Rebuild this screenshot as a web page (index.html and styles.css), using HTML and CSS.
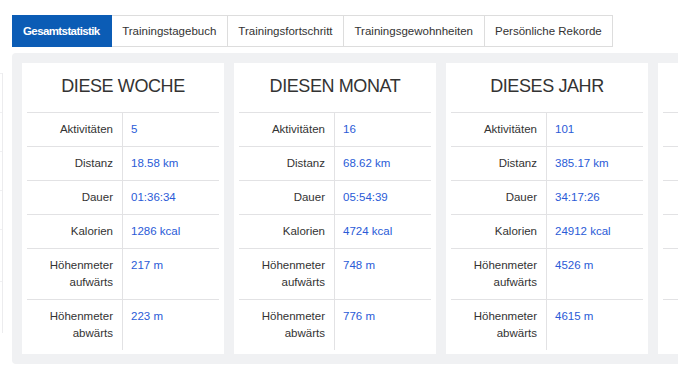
FILE: index.html
```html
<!DOCTYPE html>
<html lang="de">
<head>
<meta charset="utf-8">
<title>Statistik</title>
<link rel="stylesheet" href="styles.css">
</head>
<body>
<div class="page">
  <div class="sliver">
    <div class="sliver-row"></div>
    <div class="sliver-row"></div>
    <div class="sliver-row"></div>
    <div class="sliver-row"></div>
    <div class="sliver-row tall"></div>
    <div class="sliver-row tall"></div>
  </div>
  <div class="main">
    <nav class="tabs">
      <a class="tab active">Gesamtstatistik</a>
      <a class="tab">Trainingstagebuch</a>
      <a class="tab">Trainingsfortschritt</a>
      <a class="tab">Trainingsgewohnheiten</a>
      <a class="tab">Persönliche Rekorde</a>
    </nav>
    <div class="panel">
      <section class="card">
        <h2 class="card-title">DIESE WOCHE</h2>
        <table class="stats">
          <tr><th>Aktivitäten</th><td>5</td></tr>
          <tr><th>Distanz</th><td>18.58 km</td></tr>
          <tr><th>Dauer</th><td>01:36:34</td></tr>
          <tr><th>Kalorien</th><td>1286 kcal</td></tr>
          <tr><th>Höhenmeter aufwärts</th><td>217 m</td></tr>
          <tr><th>Höhenmeter abwärts</th><td>223 m</td></tr>
        </table>
      </section>
      <section class="card">
        <h2 class="card-title">DIESEN MONAT</h2>
        <table class="stats">
          <tr><th>Aktivitäten</th><td>16</td></tr>
          <tr><th>Distanz</th><td>68.62 km</td></tr>
          <tr><th>Dauer</th><td>05:54:39</td></tr>
          <tr><th>Kalorien</th><td>4724 kcal</td></tr>
          <tr><th>Höhenmeter aufwärts</th><td>748 m</td></tr>
          <tr><th>Höhenmeter abwärts</th><td>776 m</td></tr>
        </table>
      </section>
      <section class="card">
        <h2 class="card-title">DIESES JAHR</h2>
        <table class="stats">
          <tr><th>Aktivitäten</th><td>101</td></tr>
          <tr><th>Distanz</th><td>385.17 km</td></tr>
          <tr><th>Dauer</th><td>34:17:26</td></tr>
          <tr><th>Kalorien</th><td>24912 kcal</td></tr>
          <tr><th>Höhenmeter aufwärts</th><td>4526 m</td></tr>
          <tr><th>Höhenmeter abwärts</th><td>4615 m</td></tr>
        </table>
      </section>
      <section class="card" aria-hidden="true">
        <div class="card-title"></div>
        <table class="stats">
          <tr><th></th><td></td></tr>
          <tr><th></th><td></td></tr>
          <tr><th></th><td></td></tr>
          <tr><th></th><td></td></tr>
          <tr class="tall-row"><th></th><td></td></tr>
          <tr class="tall-row"><th></th><td></td></tr>
        </table>
      </section>
    </div>
  </div>
</div>
</body>
</html>
```

FILE: styles.css
```css
html, body {
  margin: 0;
  padding: 0;
  overflow: hidden;
  background: #ffffff;
}

body {
  font-family: "Liberation Sans", Arial, sans-serif;
  color: #333333;
}

.page {
  display: flex;
  align-items: flex-start;
  width: 678px;
  height: 383px;
  overflow: hidden;
}

.sliver {
  flex: none;
  width: 2px;
  margin-top: 73px;
  margin-right: 9px;
  border-right: 1px solid #ececee;
  display: flex;
  flex-direction: column;
}

.sliver-row {
  height: 38px;
  border-top: 1px solid #f0f0f2;
}

.sliver-row.tall {
  height: 51px;
}

.main {
  flex: none;
  padding-top: 15px;
}

.tabs {
  display: flex;
  height: 32px;
}

.tab {
  display: block;
  padding: 0 10.5px;
  font-size: 11.5px;
  line-height: 30px;
  color: #333333;
  border: 1px solid #dddddd;
  border-left: none;
  white-space: nowrap;
}

.tab.active {
  padding: 0 11px;
  background: #0b5cb5;
  border-color: #0b5cb5;
  color: #ffffff;
  font-weight: bold;
  letter-spacing: -0.6px;
}

.panel {
  margin-top: 6px;
  display: flex;
  gap: 10px;
  width: max-content;
  padding: 10px;
  background: #f0f1f3;
  border-radius: 4px;
}

.card {
  flex: none;
  width: 192px;
  padding: 0 5px 4px;
  background: #ffffff;
}

.card-title {
  margin: 0;
  padding-bottom: 3px;
  height: 46px;
  line-height: 46px;
  font-size: 18px;
  font-weight: normal;
  text-align: center;
  color: #333333;
  letter-spacing: -0.4px;
  white-space: nowrap;
}

.stats {
  width: 192px;
  border-collapse: collapse;
  font-size: 11.5px;
  line-height: 17px;
}

.stats th,
.stats td {
  height: 17px;
  padding: 8px 8px 8px 9px;
  border-top: 1px solid #e2e2e4;
  vertical-align: top;
}

.stats .tall-row th,
.stats .tall-row td {
  height: 34px;
}

.stats th {
  width: 77px;
  padding-right: 9px;
  text-align: right;
  font-weight: normal;
  color: #333333;
  border-right: 1px solid #e2e2e4;
}

.stats td {
  padding-left: 8px;
  text-align: left;
  color: #2a5bd7;
  white-space: nowrap;
}
```
